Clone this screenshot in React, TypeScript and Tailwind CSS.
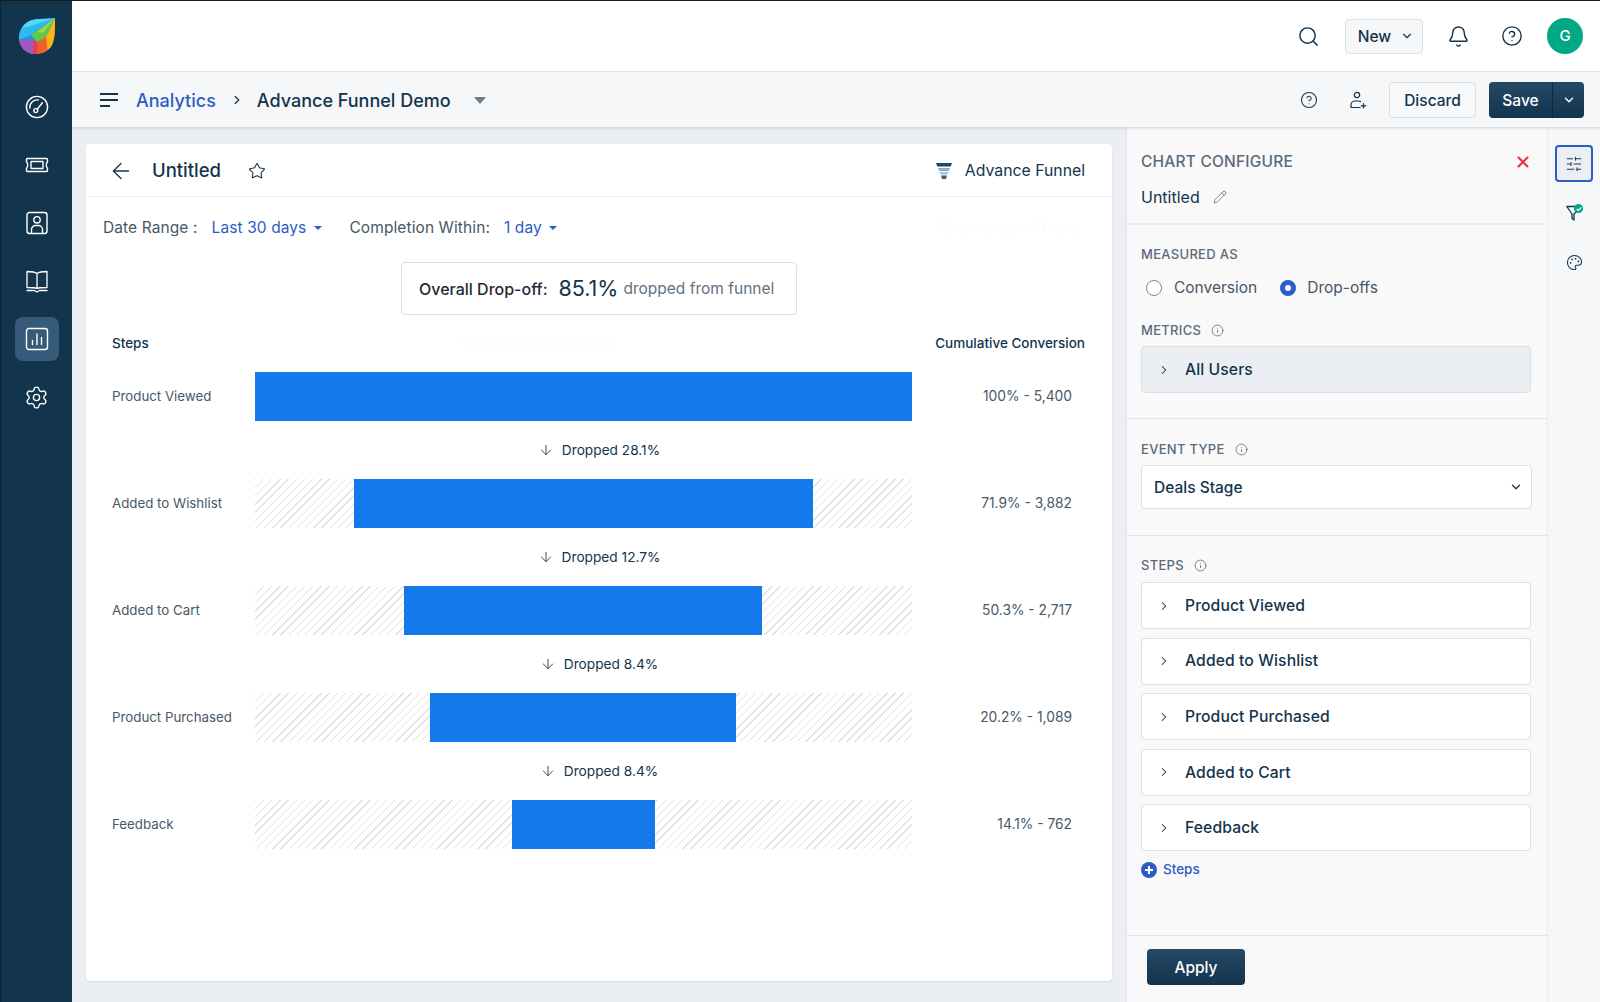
import React from 'react';
import {
  ArrowDown,
  ArrowLeft,
  Bell,
  ChevronDown,
  ChevronRight,
  CircleHelp,
  Info,
  Pencil,
  Palette,
  Search,
  Settings,
  SlidersHorizontal,
  Star,
  X,
} from 'lucide-react';

const funnelRows = [
  { name: 'Product Viewed', left: 0, width: 657, value: '100% - 5,400', drop: 'Dropped 28.1%' },
  { name: 'Added to Wishlist', left: 99, width: 459, value: '71.9% - 3,882', drop: 'Dropped 12.7%' },
  { name: 'Added to Cart', left: 149, width: 358, value: '50.3% - 2,717', drop: 'Dropped 8.4%' },
  { name: 'Product Purchased', left: 175, width: 306, value: '20.2% - 1,089', drop: 'Dropped 8.4%' },
  { name: 'Feedback', left: 257, width: 143, value: '14.1% - 762', drop: '' },
];

const stepNames = ['Product Viewed', 'Added to Wishlist', 'Product Purchased', 'Added to Cart', 'Feedback'];

const Logo = () => (
  <svg width="36" height="36" viewBox="0 0 36 36">
    <defs>
      <clipPath id="leaf">
        <path d="M36 0 C36 8 36.500 20 33 27 C29 34 22 36 16 36 C7 36 0 29 0 20 C0 9 8 2 18 1 C24 .5 30 .5 36 0 Z" />
      </clipPath>
    </defs>
    <g clipPath="url(#leaf)">
      <rect width="36" height="36" fill="#2b8fe0" />
      <path d="M0 8 L36 0 L12 17 L0 22 Z" fill="#2db9ee" />
      <path d="M4 2 L36 0 L8 9 L0 10 Z" fill="#4fdcf0" />
      <path d="M0 22 L15 22 L14 36 L0 36 Z" fill="#a557c0" />
      <path d="M14 23 L24 22 L22 36 L14 36 Z" fill="#e2405a" />
      <path d="M19 24 L29 14 L31 36 L18 36 Z" fill="#f1602a" />
      <path d="M27 19 L36 0 L37 36 L29 36 Z" fill="#ffb511" />
      <path d="M12 17 L36 0 L27 19 L18 24 Z" fill="#5fc84d" />
      <path d="M18 14 L36 0 L24 15 Z" fill="#9bd94a" />
    </g>
  </svg>
);

const GaugeIcon = () => (
  <svg width="24" height="24" viewBox="0 0 24 24" fill="none" stroke="currentColor" strokeWidth="1.400" strokeLinecap="round">
    <circle cx="12" cy="12" r="10.600" />
    <path d="M4.800 13a7.400 7.400 0 0 1 8.400-8" />
    <circle cx="10.800" cy="15.600" r="2" />
    <path d="M12.200 14.200 L17.400 7.800" />
  </svg>
);

const TicketIcon = () => (
  <svg width="24" height="24" viewBox="0 0 24 24" fill="none" stroke="currentColor" strokeWidth="1.400" strokeLinejoin="round">
    <path d="M2.500 5.500h19q1 0 1 1v2q-2.400 3.500 0 7v2q0 1-1 1h-19q-1 0-1-1v-2q2.400-3.500 0-7v-2q0-1 1-1Z" />
    <rect x="6" y="8.500" width="12" height="7" rx=".5" />
  </svg>
);

const ContactIcon = () => (
  <svg width="24" height="24" viewBox="0 0 24 24" fill="none" stroke="currentColor" strokeWidth="1.400">
    <rect x="2" y="1.500" width="20" height="21" rx="2.500" />
    <circle cx="12" cy="8.800" r="3.200" />
    <path d="M6.500 22.500v-4a4 4 0 0 1 4-4h3a4 4 0 0 1 4 4v4" />
  </svg>
);

const BookIcon = () => (
  <svg width="24" height="24" viewBox="0 0 24 24" fill="none" stroke="currentColor" strokeWidth="1.300" strokeLinejoin="round">
    <path d="M12 4.500V19.500M12 4.500C10 3 6 2.500 2 2.500v16c4 0 8 .2 10 1 2-.8 6-1 10-1v-16c-4 0-8 .5-10 2Z" />
    <path d="M2 21.500h7.500l2.500 1.500 2.500-1.500H22" strokeLinecap="round" />
  </svg>
);

const ChartIcon = () => (
  <svg width="24" height="24" viewBox="0 0 24 24" fill="none" stroke="currentColor" strokeWidth="1.400" strokeLinecap="round">
    <rect x="1.500" y="1.500" width="21" height="21" rx="2.500" />
    <path d="M7.500 17.500v-4M12 17.500V7M16.500 17.500v-7" />
  </svg>
);

const MenuLines = () => (
  <svg width="20" height="16" viewBox="0 0 20 16" fill="none" stroke="#12344d" strokeWidth="2">
    <path d="M1 2h18M1 8h18M1 14h10" />
  </svg>
);

const FunnelIcon = () => (
  <svg width="16" height="16" viewBox="0 0 16 16">
    <path d="M0 0h16l-1.300 3.500H1.300Z" fill="#1f4a6b" />
    <path d="M2 5h12l-1 3H3Z" fill="#8fb0cb" />
    <path d="M3.500 9h9l-1 2.500h-7Z" fill="#a9c3d8" />
    <path d="M5 12.500h6L10 16H6Z" fill="#2f648f" />
  </svg>
);

const UserPlusIcon = () => (
  <svg width="18" height="18" viewBox="0 0 18 18" fill="none" stroke="#12344d" strokeWidth="1.200" strokeLinecap="round">
    <circle cx="8" cy="4" r="2.700" />
    <path d="M2 16.500v-2.500a4 4 0 0 1 4-4h3.500a4 4 0 0 1 2 .6M2 16.500h9M14.500 12.500v4.500M12.200 14.800h4.600" />
  </svg>
);

const FunnelCheckIcon = () => (
  <div className="relative w-[16px] h-[16px]">
    <svg width="16" height="16" viewBox="0 0 16 16" fill="none" stroke="#12344d" strokeWidth="1.300" strokeLinejoin="round">
      <path d="M.800 1.500h8l2.500 4.500-3.300 3v6l-2-1.500v-4.500Z" />
    </svg>
    <div className="absolute right-[-1px] top-[-1px] w-[9px] h-[9px] rounded-full bg-[#00a886] flex items-center justify-center">
      <svg width="6" height="6" viewBox="0 0 8 8" fill="none" stroke="white" strokeWidth="1.500">
        <path d="M1 4l2 2 4-4" />
      </svg>
    </div>
  </div>
);

const Caret = () => (
  <span className="inline-block w-0 h-0 border-x-[4px] border-x-transparent border-t-[4px] border-t-[#2c5cc5]" />
);

const SectionLabel = ({ text, info }: { text: string; info?: boolean }) => (
  <div className="flex items-center gap-[10px] text-[13px] leading-4 font-medium tracking-[0.3px] text-[#5a6b7a]">
    {text}
    {info && <Info size={13} strokeWidth={1.500} className="text-[#5a6b7a]" />}
  </div>
);

const Accordion = ({ label, shaded }: { label: string; shaded?: boolean }) => (
  <div
    className={`h-[47px] w-[390px] rounded-[4px] border flex items-center pl-[15px] ${
      shaded ? 'bg-[#ebeff3] border-[#d8dfe6]' : 'bg-white border-[#d8e0e8]'
    }`}
  >
    <ChevronRight size={14} strokeWidth={1.800} className="text-[#12344d]" />
    <span className="ml-[14px] text-[15.700px] tracking-[0.1px] font-medium text-[#12344d]">{label}</span>
  </div>
);

const SideItem = ({ children, active }: { children: React.ReactNode; active?: boolean }) => (
  <div
    className={`w-11 h-11 rounded-[8px] flex items-center justify-center text-white ${
      active ? 'bg-[#365b7a]' : ''
    }`}
  >
    {children}
  </div>
);

const App: React.FC = () => {
  return (
    <div className="w-[1600px] h-[1002px] overflow-hidden flex bg-[#ebeff3] border-t border-[#1a1a1a] font-['Inter',sans-serif] text-[#12344d]">
      {/* left nav */}
      <aside className="w-[72px] shrink-0 bg-[#12344d] flex flex-col items-center border-l border-[#0c2536]">
        <div className="mt-[17px] mb-[31px] h-[36px]">
          <Logo />
        </div>
        <div className="flex flex-col items-center gap-[14px]">
          <SideItem><GaugeIcon /></SideItem>
          <SideItem><TicketIcon /></SideItem>
          <SideItem><ContactIcon /></SideItem>
          <SideItem><BookIcon /></SideItem>
          <SideItem active><ChartIcon /></SideItem>
          <SideItem><Settings size={25} strokeWidth={1.300} /></SideItem>
        </div>
      </aside>

      <div className="flex-1 min-w-0 flex flex-col">
        {/* top bar */}
        <header className="h-[71px] shrink-0 bg-white border-b border-[#e6eaee] flex items-center justify-end pr-[17px]">
          <Search size={23} strokeWidth={1.500} />
          <button className="ml-[25px] w-[78px] h-[35px] pl-[4px] rounded-[4px] border border-[#d8e0e8] bg-[#f5f7f9] flex items-center justify-center gap-[9px] text-[15.500px] font-medium">
            <span className="pt-px">New</span>
            <ChevronDown size={14} strokeWidth={2} />
          </button>
          <Bell size={23} strokeWidth={1.500} className="ml-[24px]" />
          <CircleHelp size={22} strokeWidth={1.500} className="ml-[31px]" />
          <div className="ml-[24px] w-9 h-9 rounded-full bg-[#00a886] text-white text-[15px] font-medium flex items-center justify-center">
            G
          </div>
        </header>

        {/* breadcrumb bar */}
        <div className="relative z-10 h-[55px] shrink-0 pt-px bg-[#f5f7f9] shadow-[0_1px_3px_rgba(18,52,77,0.18)] flex items-center pl-[27px] pr-[16px]">
          <MenuLines />
          <span className="ml-[17px] text-[18px] font-medium text-[#2c5cc5]">Analytics</span>
          <ChevronRight size={14} strokeWidth={2.200} className="ml-[14px]" />
          <span className="ml-[13px] text-[18px] font-medium">Advance Funnel Demo</span>
          <span className="ml-[23px] inline-block w-0 h-0 border-x-[6px] border-x-transparent border-t-[7px] border-t-[#6f7c87]" />
          <div className="ml-auto flex items-center">
            <CircleHelp size={18} strokeWidth={1.400} />
            <div className="ml-[31px]"><UserPlusIcon /></div>
            <button className="ml-[22px] w-[87px] h-[36px] pt-px rounded-[4px] border border-[#d8e0e8] bg-[#f8f9fa] text-[15.500px] font-medium">
              Discard
            </button>
            <div className="ml-[13px] w-[95px] h-[36px] rounded-[4px] bg-gradient-to-b from-[#264966] to-[#12344d] text-white flex items-center text-[15.500px] font-medium">
              <span className="w-[63px] text-center pt-px">Save</span>
              <span className="h-full w-px bg-[#0e2a3f]" />
              <span className="flex-1 flex justify-center"><ChevronDown size={14} strokeWidth={2.400} /></span>
            </div>
          </div>
        </div>

        <div className="flex-1 min-h-0 flex">
          {/* chart area */}
          <main className="w-[1054px] shrink-0 pt-[17px] pl-[14px] pr-[14px] pb-[21px]">
            <div className="h-full bg-white rounded-[4px] shadow-[0_1px_2px_rgba(18,52,77,0.1)] flex flex-col">
              <div className="h-[53px] shrink-0 pt-[2px] border-b border-[#f0f2f5] flex items-center pl-[22px] pr-[27px]">
                <ArrowLeft size={26} strokeWidth={1.200} />
                <span className="ml-[18px] text-[18.500px] font-medium">Untitled</span>
                <Star size={18} strokeWidth={1.400} className="ml-[27px]" />
                <div className="ml-auto flex items-center gap-[13px] text-[15.800px]">
                  <FunnelIcon />
                  Advance Funnel
                </div>
              </div>

              <div className="flex items-center pl-[17px] pr-[32px] mt-[21px] h-[20px] text-[15.500px] tracking-[0.1px]">
                <span className="text-[#475867]">Date Range :</span>
                <span className="ml-[14px] text-[#2c5cc5]">Last 30 days</span>
                <span className="ml-[8px] flex"><Caret /></span>
                <span className="ml-[27px] text-[#475867]">Completion Within:</span>
                <span className="ml-[14px] text-[#2c5cc5]">1 day</span>
                <span className="ml-[7px] flex"><Caret /></span>
                <span className="ml-auto text-[#fcfcfc]">Show drop-off rate</span>
              </div>

              <div className="mt-[24px] self-center w-[396px] h-[53px] rounded-[4px] border border-[#d8e0e8] flex items-center pl-[17px] whitespace-nowrap">
                <span className="text-[16px] font-medium text-[#1e2a35]">Overall Drop-off:</span>
                <span className="ml-[11px] text-[21.500px]">85.1%</span>
                <span className="ml-[5px] text-[15.500px] text-[#5f7183]">dropped from funnel</span>
              </div>

              <div className="mt-[19px] flex items-center justify-between pl-[26px] pr-[27px] h-[18px] text-[13.500px] font-medium">
                <span>Steps</span>
                <span className="text-[#fdfdfd] ml-[-8px]">Next Step Conversation</span>
                <span>Cumulative Conversion</span>
              </div>

              <div className="mt-[20px] flex flex-col">
                {funnelRows.map(row => (
                  <div key={row.name}>
                    <div className="flex items-center h-[49px]">
                      <span className="w-[169px] shrink-0 pl-[26px] text-[13.300px] text-[#475867]">{row.name}</span>
                      <div className="relative w-[657px] h-full shrink-0 bg-[repeating-linear-gradient(135deg,#e0e0e0_0,#e0e0e0_1px,transparent_1px,transparent_5.800px)]">
                        <div
                          className="absolute top-0 bottom-0 bg-[#1479ea]"
                          style={{ left: row.left, width: row.width }}
                        />
                      </div>
                      <span className="flex-1 pr-[40px] text-right text-[13.800px] text-[#475867]">{row.value}</span>
                    </div>
                    {row.drop && (
                      <div className="h-[58px] flex items-center justify-center gap-[8px] text-[13.700px]">
                        <ArrowDown size={16} strokeWidth={1.300} />
                        {row.drop}
                      </div>
                    )}
                  </div>
                ))}
              </div>
            </div>
          </main>

          {/* configure panel */}
          <section className="w-[421px] shrink-0 border-l border-[#e2e7ec] bg-[#f9f9fa] flex flex-col">
            <div className="h-[98px] shrink-0 border-b-2 border-[#eceff2] pl-[14px] pr-[15px] pt-[25px]">
              <div className="flex items-center justify-between">
                <span className="text-[15.500px] leading-5 font-medium tracking-[0.2px] text-[#5a6b7a]">CHART CONFIGURE</span>
                <X size={18} strokeWidth={2.800} className="text-[#e43538]" />
              </div>
              <div className="mt-[15px] flex items-center gap-[13px] text-[16px] leading-5">
                Untitled
                <Pencil size={14} strokeWidth={1.200} className="text-[#475867]" />
              </div>
            </div>

            <div className="h-[194px] shrink-0 border-b border-[#e2e6ea] pl-[14px] pt-[21px]">
              <SectionLabel text="MEASURED AS" />
              <div className="mt-[16px] flex items-center h-[20px] pl-[5px] text-[15.500px] text-[#475867]">
                <span className="w-4 h-4 rounded-full border-[1.500px] border-[#7b8a97] bg-white" />
                <span className="ml-[12px]">Conversion</span>
                <span className="ml-[23px] w-4 h-4 rounded-full border-[5px] border-[#2c5cc5] bg-white" />
                <span className="ml-[11px]">Drop-offs</span>
              </div>
              <div className="mt-[24px]">
                <SectionLabel text="METRICS" info />
              </div>
              <div className="mt-[8px]">
                <Accordion label="All Users" shaded />
              </div>
            </div>

            <div className="h-[117px] shrink-0 border-b border-[#e2e6ea] pl-[14px] pt-[22px]">
              <SectionLabel text="EVENT TYPE" info />
              <div className="mt-[8px] w-[391px] h-[44px] rounded-[4px] border border-[#d8e0e8] bg-white flex items-center justify-between pl-[12px] pr-[8px] text-[15.500px] font-[450]">
                <span className="pt-px">Deals Stage</span>
                <ChevronDown size={14} strokeWidth={2.200} />
              </div>
            </div>

            <div className="flex-1 min-h-0 pl-[14px] pt-[21px]">
              <SectionLabel text="STEPS" info />
              <div className="mt-[9px] flex flex-col gap-[8.600px]">
                {stepNames.map(step => (
                  <Accordion key={step} label={step} />
                ))}
              </div>
              <div className="mt-[8px] flex items-center gap-[6px] text-[13.500px] font-medium text-[#2c5cc5]">
                <span className="w-4 h-4 rounded-full bg-[#2c5cc5] text-white flex items-center justify-center">
                  <svg width="10" height="10" viewBox="0 0 10 10" stroke="white" strokeWidth="2"><path d="M5 1v8M1 5h8" /></svg>
                </span>
                Steps
              </div>
            </div>

            <div className="h-[67px] shrink-0 border-t border-[#e2e6ea] pl-[20px] pt-[13px]">
              <button className="w-[98px] h-[36px] pt-px rounded-[4px] bg-gradient-to-b from-[#264966] to-[#12344d] text-white text-[15.500px] font-medium">
                Apply
              </button>
            </div>
          </section>

          {/* right rail */}
          <aside className="w-[53px] shrink-0 border-l border-[#e8ecf0] bg-[#f5f7f9] flex flex-col items-center pt-[18px]">
            <div className="w-[38px] h-[37px] rounded-[4px] border-2 border-[#2c5cc5] bg-[#ebeff3] flex items-center justify-center">
              <SlidersHorizontal size={18} strokeWidth={1.300} />
            </div>
            <div className="mt-[23px]"><FunnelCheckIcon /></div>
            <Palette size={17} strokeWidth={1.500} className="mt-[33px]" />
          </aside>
        </div>
      </div>
    </div>
  );
};

export default App;
